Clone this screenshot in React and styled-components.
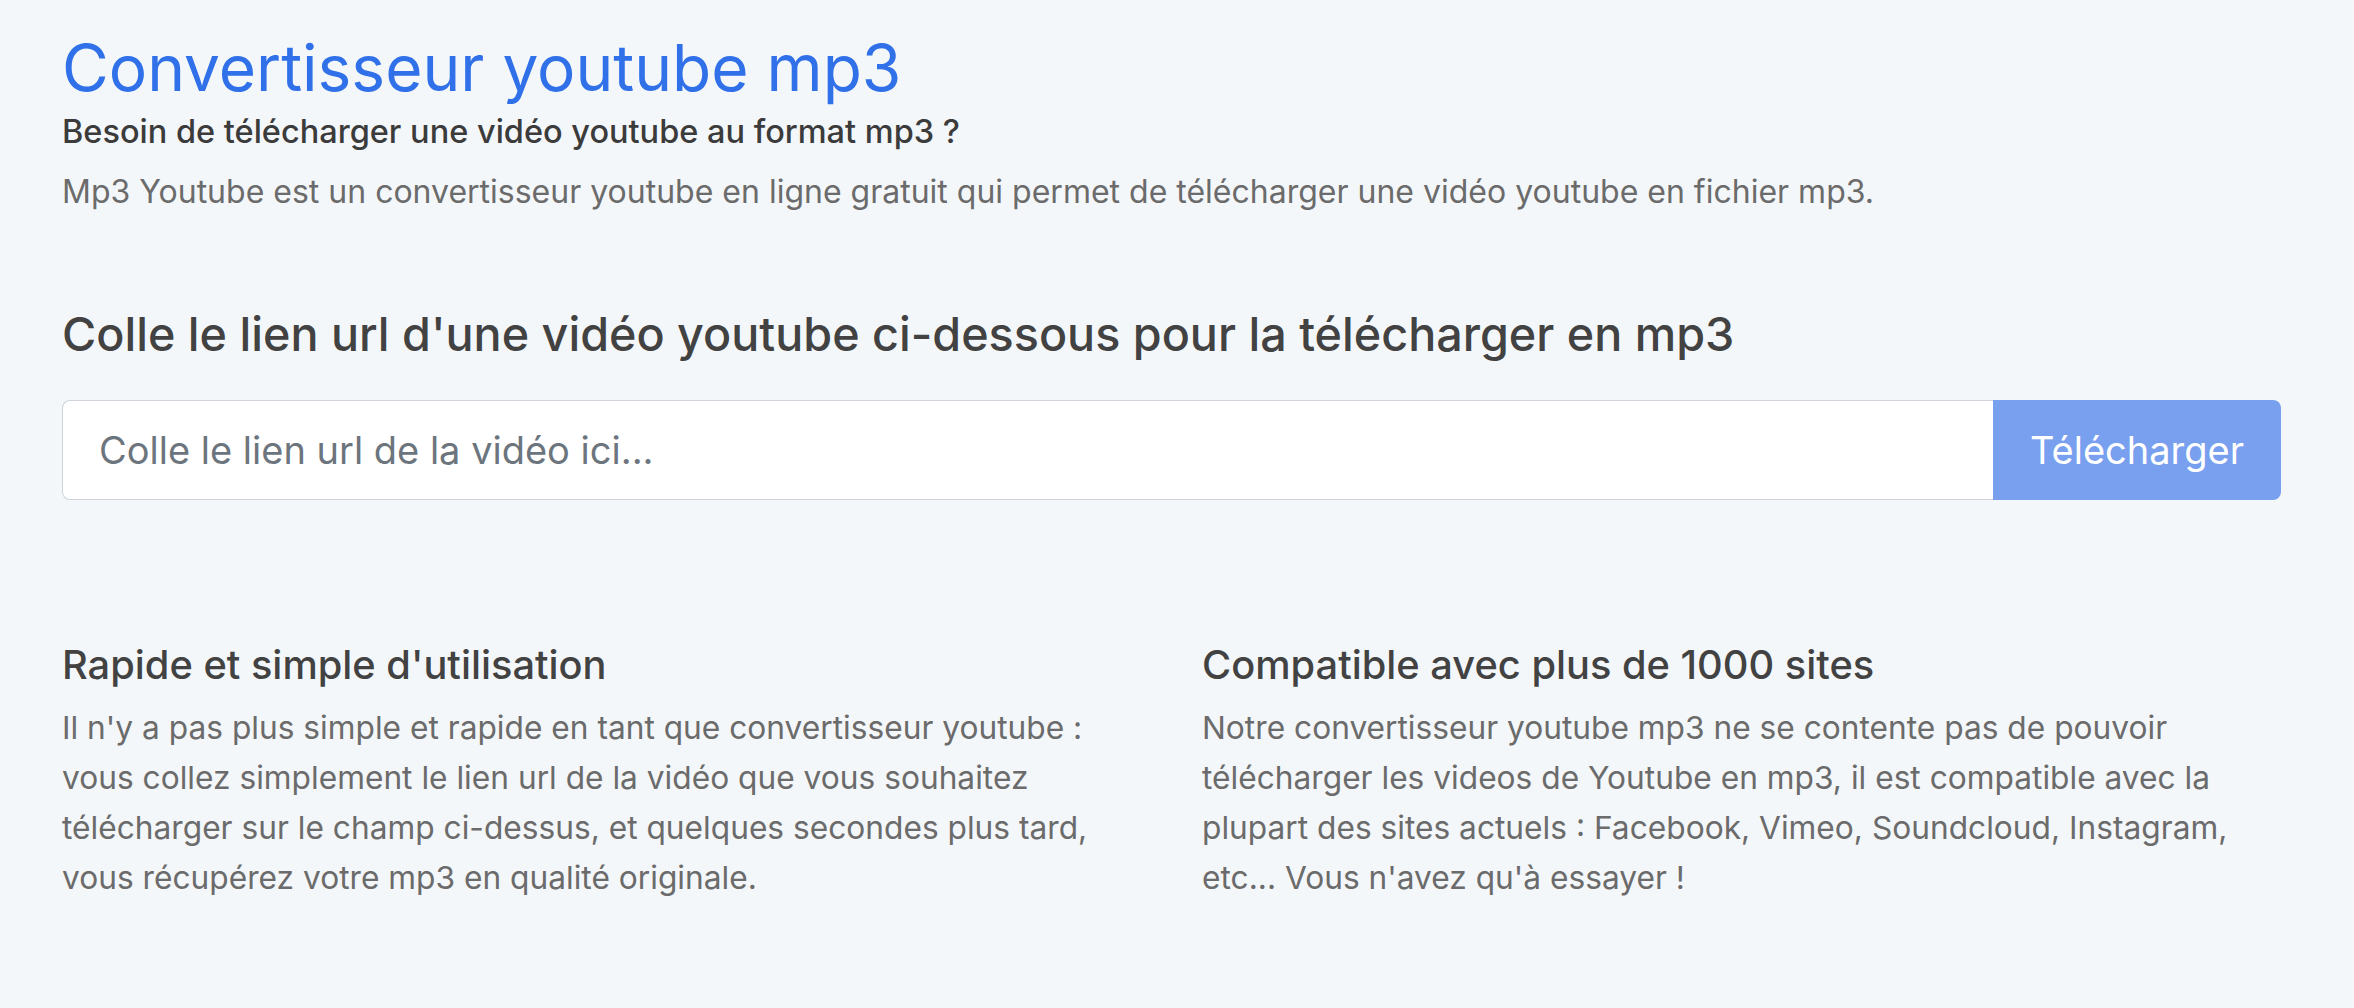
import React from "react";
import styled, { createGlobalStyle } from "styled-components";

const Global = createGlobalStyle`
  html, body {
    margin: 0;
    padding: 0;
    background: #f4f7fa;
  }
  body {
    font-family: Inter, "Noto Sans", "Liberation Sans", sans-serif;
    -webkit-font-smoothing: antialiased;
  }
`;

const Page = styled.main`
  box-sizing: border-box;
  width: 2354px;
  min-height: 1008px;
  padding: 28px 73px 40px 62px;
  background: #f4f7fa;
`;

const Title = styled.h1`
  margin: 0;
  font-size: 64px;
  line-height: 80px;
  font-weight: 400;
  color: #3070e8;
`;

const Subtitle = styled.h2`
  margin: 4px 0 0;
  font-size: 32.5px;
  line-height: 40px;
  font-weight: 500;
  color: #3b3b3b;
`;

const Lead = styled.p`
  margin: 20px 0 0;
  font-size: 32px;
  line-height: 40px;
  font-weight: 400;
  color: #6b6b6b;
`;

const Heading = styled.h2`
  margin: 94px 0 0;
  font-size: 46.7px;
  line-height: 56px;
  font-weight: 500;
  color: #424242;
`;

const Form = styled.form`
  display: flex;
  margin-top: 38px;
  height: 100px;
`;

const UrlInput = styled.input`
  flex: 1;
  box-sizing: border-box;
  height: 100%;
  margin: 0;
  padding: 0 36px;
  border: 1px solid #ced4da;
  border-right: none;
  border-radius: 8px 0 0 8px;
  background: #fff;
  font-family: inherit;
  font-size: 38px;
  color: #212529;
  outline: none;
  &::placeholder {
    color: #6c757d;
  }
`;

const SubmitButton = styled.button`
  box-sizing: border-box;
  width: 288px;
  height: 100%;
  margin: 0;
  border: none;
  border-radius: 0 8px 8px 0;
  background: #78a0ef;
  color: #fff;
  font-family: inherit;
  font-size: 38px;
  font-weight: 400;
  cursor: default;
`;

const Features = styled.section`
  display: grid;
  grid-template-columns: 1fr 1fr;
  column-gap: 61px;
  margin-top: 141px;
`;

const Feature = styled.article`
  min-width: 0;
`;

const FeatureTitle = styled.h3`
  margin: 0;
  font-size: 39.8px;
  line-height: 48px;
  font-weight: 500;
  color: #424242;
`;

const FeatureText = styled.p`
  margin: 14px 0 0;
  font-size: 31.7px;
  line-height: 50px;
  color: #6b6b6b;
`;

export default function App() {
  return (
    <>
      <Global />
      <Page>
        <Title>Convertisseur youtube mp3</Title>
        <Subtitle>Besoin de télécharger une vidéo youtube au format mp3 ?</Subtitle>
        <Lead>
          Mp3 Youtube est un convertisseur youtube en ligne gratuit qui permet de télécharger une vidéo youtube en fichier mp3.
        </Lead>
        <Heading>Colle le lien url d'une vidéo youtube ci-dessous pour la télécharger en mp3</Heading>
        <Form onSubmit={(e) => e.preventDefault()}>
          <UrlInput type="text" placeholder="Colle le lien url de la vidéo ici..." />
          <SubmitButton type="submit" disabled>Télécharger</SubmitButton>
        </Form>
        <Features>
          <Feature>
            <FeatureTitle>Rapide et simple d'utilisation</FeatureTitle>
            <FeatureText>
              Il n'y a pas plus simple et rapide en tant que convertisseur youtube : vous collez simplement le lien url de la vidéo que vous souhaitez télécharger sur le champ ci-dessus, et quelques secondes plus tard, vous récupérez votre mp3 en qualité originale.
            </FeatureText>
          </Feature>
          <Feature>
            <FeatureTitle>Compatible avec plus de 1000 sites</FeatureTitle>
            <FeatureText>
              Notre convertisseur youtube mp3 ne se contente pas de pouvoir
              <br />
              télécharger les videos de Youtube en mp3, il est compatible avec la plupart des sites actuels : Facebook, Vimeo, Soundcloud, Instagram, etc... Vous n'avez qu'à essayer !
            </FeatureText>
          </Feature>
        </Features>
      </Page>
    </>
  );
}
